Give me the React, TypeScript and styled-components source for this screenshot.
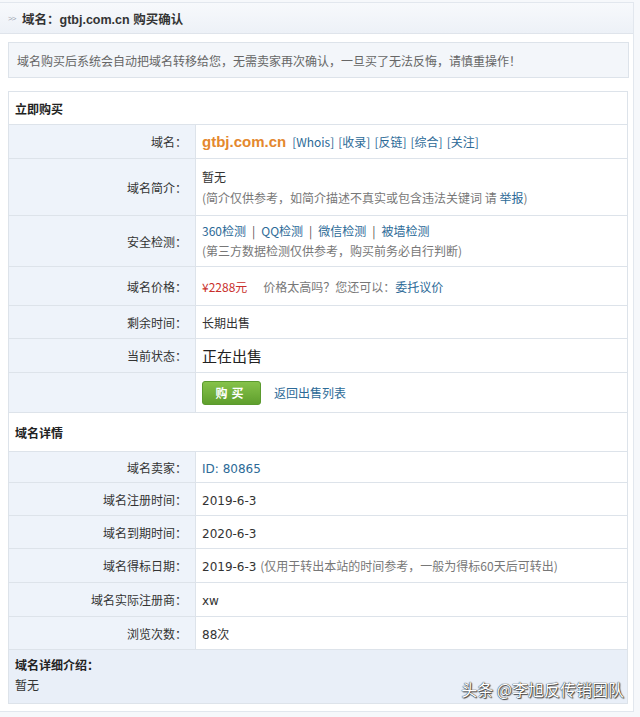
import React from "react";
import styled, { createGlobalStyle } from "styled-components";

const Global = createGlobalStyle`
  html, body { margin: 0; padding: 0; background: #ffffff; }
  body { font-family: "DejaVu Sans", "Noto Sans CJK SC", sans-serif; font-size: 12px; color: #333; }
  * { box-sizing: border-box; }
`;

const Page = styled.div`
  position: relative;
  width: 640px;
  height: 717px;
  padding: 2px 6px 5px 0;
  background: #f6f8fb;
`;

const Panel = styled.div`
  height: 100%;
  border: 1px solid #e2e7ee;
  border-left: none;
  background: #ffffff;
  padding: 0 4px 0 8px;
  display: flex;
  flex-direction: column;
`;

const TitleBar = styled.div`
  height: 31px;
  margin-left: -8px;
  margin-right: -4px;
  padding-left: 8px;
  display: flex;
  align-items: center;
  gap: 3px;
  background: linear-gradient(#f7f9fc, #edf1f7);
  border-bottom: 1px solid #dfe4eb;
  font-weight: bold;
  font-size: 12.5px;
  color: #333;
  font-family: "Liberation Sans", "Noto Sans CJK SC", sans-serif;
`;

const Chevron = styled.span`
  color: #9aa4b0;
  font-size: 8px;
  font-weight: normal;
  letter-spacing: -1px;
  width: 11px;
`;

const Notice = styled.div`
  margin-top: 8px;
  height: 36px;
  padding-left: 8px;
  display: flex;
  align-items: center;
  background: #f3f6fa;
  border: 1px solid #dde3ea;
  color: #666;
  font-size: 12px;
  font-family: "Noto Sans CJK SC", sans-serif;
`;

const Table = styled.table`
  margin-top: 13px;
  width: 620px;
  border-collapse: collapse;
  border: 1px solid #dde3ea;
  table-layout: fixed;
  font-family: "Noto Sans CJK SC", sans-serif;
`;

const SectionHead = styled.td`
  height: ${(p: { $h: number }) => p.$h}px;
  padding-left: 6px;
  font-weight: bold;
  font-size: 12px;
  color: #222;
  background: #ffffff;
  border-bottom: 1px solid #dde3ea;
`;

const Label = styled.th`
  width: 187px;
  height: ${(p: { $h: number }) => p.$h}px;
  padding-right: 8px;
  text-align: right;
  font-weight: normal;
  font-size: 12px;
  color: #333;
  background: #eef3fa;
  border-right: 1px solid #dde3ea;
  border-bottom: 1px solid #dde3ea;
`;

const Value = styled.td`
  padding-left: 6px;
  background: #ffffff;
  border-bottom: 1px solid #dde3ea;
  font-size: 12px;
  color: #333;
`;

const Line = styled.div<{ $gap?: number }>`
  line-height: 20px;
  margin-top: ${(p) => p.$gap ?? 0}px;
`;

const Domain = styled.span`
  font-family: "Liberation Sans", sans-serif;
  font-weight: bold;
  font-size: 15px;
  color: #e4882e;
  margin-right: 6px;
`;

const Link = styled.a`
  color: #2c6a97;
  text-decoration: none;
  cursor: pointer;
`;

const Bracket = styled(Link)`
  margin-right: 4px;
`;

const Note = styled.span`
  color: #777;
`;

const Sep = styled.span`
  color: #555;
  margin: 0 6px;
`;

const Price = styled.span`
  color: #c9302c;
  margin-right: 16px;
`;

const Status = styled.span`
  font-size: 15px;
  color: #222;
`;

const Mono = styled.span`
  font-family: "DejaVu Sans", sans-serif;
`;

const TitleLatin = styled.span`
  font-family: "Liberation Sans", sans-serif;
`;

const Actions = styled.div`
  display: flex;
  align-items: center;
  gap: 13px;
`;

const BuyButton = styled.button`
  width: 59px;
  height: 24px;
  border: 1px solid #5b9a2e;
  border-radius: 3px;
  background: linear-gradient(#86c24a, #5f9f2d);
  color: #ffffff;
  font-weight: bold;
  font-size: 12px;
  font-family: "Noto Sans CJK SC", sans-serif;
  letter-spacing: 4px;
  padding-left: 6px;
  cursor: pointer;
`;

const Intro = styled.td`
  height: 54px;
  padding: 4px 6px;
  background: #e9eff8;
  font-size: 12px;
  vertical-align: top;
`;

const IntroTitle = styled.div`
  font-weight: bold;
  line-height: 22px;
  color: #222;
`;

const Watermark = styled.div`
  position: absolute;
  right: 16px;
  bottom: 16px;
  font-family: "Noto Sans CJK SC", sans-serif;
  font-size: 16px;
  color: #ffffff;
  text-shadow: 0 0 1px #333, 0 0 1px #333, 1px 1px 1px #444;
  display: flex;
  align-items: center;
  gap: 4px;
`;

type Row = { label: string; h: number; content: React.ReactNode };

const buyRows: Row[] = [
  {
    label: "域名：",
    h: 34,
    content: (
      <>
        <Domain>gtbj.com.cn</Domain>
        <Bracket>[Whois]</Bracket>
        <Bracket>[收录]</Bracket>
        <Bracket>[反链]</Bracket>
        <Bracket>[综合]</Bracket>
        <Bracket>[关注]</Bracket>
      </>
    ),
  },
  {
    label: "域名简介：",
    h: 57,
    content: (
      <>
        <Line>暂无</Line>
        <Line $gap={1}>
          <Note>(简介仅供参考，如简介描述不真实或包含违法关键词 请 </Note>
          <Link>举报</Link>
          <Note>)</Note>
        </Line>
      </>
    ),
  },
  {
    label: "安全检测：",
    h: 51,
    content: (
      <>
        <Line>
          <Link>360检测</Link>
          <Sep>|</Sep>
          <Link>QQ检测</Link>
          <Sep>|</Sep>
          <Link>微信检测</Link>
          <Sep>|</Sep>
          <Link>被墙检测</Link>
        </Line>
        <Line>
          <Note>(第三方数据检测仅供参考，购买前务必自行判断)</Note>
        </Line>
      </>
    ),
  },
  {
    label: "域名价格：",
    h: 39,
    content: (
      <>
        <Price>¥2288元</Price>
        <Note>价格太高吗？您还可以：</Note>
        <Link>委托议价</Link>
      </>
    ),
  },
  { label: "剩余时间：", h: 33, content: "长期出售" },
  { label: "当前状态：", h: 34, content: <Status>正在出售</Status> },
  {
    label: "",
    h: 40,
    content: (
      <Actions>
        <BuyButton>购买</BuyButton>
        <Link>返回出售列表</Link>
      </Actions>
    ),
  },
];

const detailRows: Row[] = [
  { label: "域名卖家：", h: 31, content: <Link><Mono>ID: 80865</Mono></Link> },
  { label: "域名注册时间：", h: 33, content: <Mono>2019-6-3</Mono> },
  { label: "域名到期时间：", h: 33, content: <Mono>2020-6-3</Mono> },
  {
    label: "域名得标日期：",
    h: 34,
    content: (
      <>
        <Mono>2019-6-3 </Mono>
        <Note>(仅用于转出本站的时间参考，一般为得标60天后可转出)</Note>
      </>
    ),
  },
  { label: "域名实际注册商：", h: 34, content: <Mono>xw</Mono> },
  { label: "浏览次数：", h: 33, content: <><Mono>88</Mono>次</> },
];

const renderRows = (rows: Row[]) =>
  rows.map((r, i) => (
    <tr key={i}>
      <Label $h={r.h}>{r.label}</Label>
      <Value>{r.content}</Value>
    </tr>
  ));

export default function App() {
  return (
    <>
      <Global />
      <Page>
        <Panel>
          <TitleBar>
            <Chevron>&gt;&gt;</Chevron>
            <span>
              域名：<TitleLatin>gtbj.com.cn</TitleLatin> 购买确认
            </span>
          </TitleBar>
          <Notice>域名购买后系统会自动把域名转移给您，无需卖家再次确认，一旦买了无法反悔，请慎重操作！</Notice>
          <Table>
            <colgroup>
              <col style={{ width: 187 }} />
              <col />
            </colgroup>
            <tbody>
              <tr>
                <SectionHead colSpan={2} $h={33}>立即购买</SectionHead>
              </tr>
              {renderRows(buyRows)}
              <tr>
                <SectionHead colSpan={2} $h={39}>域名详情</SectionHead>
              </tr>
              {renderRows(detailRows)}
              <tr>
                <Intro colSpan={2}>
                  <IntroTitle>域名详细介绍：</IntroTitle>
                  <div>暂无</div>
                </Intro>
              </tr>
            </tbody>
          </Table>
        </Panel>
        <Watermark>头条 @李旭反传销团队</Watermark>
      </Page>
    </>
  );
}
